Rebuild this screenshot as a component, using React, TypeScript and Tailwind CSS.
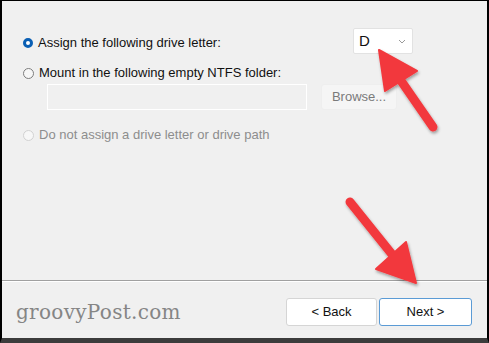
import React from 'react'

function Radio({ state }: { state: 'on' | 'off' | 'disabled' }) {
  if (state === 'on') {
    return <span className="w-[10px] h-[10px] rounded-full border-[3px] border-[#0a5fb4] bg-white shrink-0" />
  }
  return (
    <span
      className={
        'w-[11px] h-[11px] rounded-full border bg-[#f7f7f7] shrink-0 ' +
        (state === 'off' ? 'border-[#7d7d7d]' : 'border-[#d2d2d2]')
      }
    />
  )
}

function Arrows() {
  return (
    <svg className="absolute inset-0 pointer-events-none" width="489" height="343" viewBox="0 0 489 343">
      <defs>
        <filter id="sh" x="-20%" y="-20%" width="140%" height="140%">
          <feDropShadow dx="1" dy="2" stdDeviation="1.5" floodColor="#000" floodOpacity="0.35" />
        </filter>
      </defs>
      <g filter="url(#sh)" fill="#f2393d" stroke="#f2393d" strokeLinejoin="round">
        <line x1="431" y1="126" x2="395" y2="74" strokeWidth="9" strokeLinecap="round" />
        <polygon points="377,49 415,70 383,90" strokeWidth="2" />
        <line x1="348" y1="201" x2="397" y2="262" strokeWidth="9" strokeLinecap="round" />
        <polygon points="414,282 374,268 404,241" strokeWidth="2" />
      </g>
    </svg>
  )
}

export default function App() {
  return (
    <div
      className="relative w-[489px] h-[343px] bg-[#f0f0f0] border-t border-l-2 border-r-2 border-black border-b-[5px] border-b-[#3c3c3c] flex flex-col overflow-hidden"
      style={{ fontFamily: '"Liberation Sans", Arial, sans-serif' }}
    >
      <div className="flex flex-col pt-[27px] pl-[21px] pr-[74px] text-[13px] text-[#111]">
        <div className="flex items-center h-[26px]">
          <div className="flex items-center pt-[3px]">
            <Radio state="on" />
            <span className="ml-[5px]">Assign the following drive letter:</span>
          </div>
          <div className="ml-auto w-[60px] h-[26px] bg-white border border-[#e2e2e2] rounded-[2px] flex items-center pl-[5px] pr-[6px]">
            <span className="text-[15px]">D</span>
            <svg className="ml-auto" width="8" height="5" viewBox="0 0 8 5">
              <path d="M1 1 L4 4 L7 1" fill="none" stroke="#9a9a9a" strokeWidth="1" />
            </svg>
          </div>
        </div>
        <div className="flex items-center h-[16px] mt-[11px]">
          <Radio state="off" />
          <span className="ml-[5px]">Mount in the following empty NTFS folder:</span>
        </div>
        <div className="flex items-center mt-[3px] pl-[24px]">
          <div className="w-[260px] h-[26px] border border-white bg-[#f0f0f0]" />
          <div className="ml-[14px] w-[76px] h-[26px] rounded-[3px] bg-[#f5f5f5] border border-[#eeeeee] flex items-center justify-center text-[#7a7a7a]">
            Browse...
          </div>
        </div>
        <div className="flex items-center h-[16px] mt-[17px] text-[#8d8d8d]">
          <Radio state="disabled" />
          <span className="ml-[5px]">Do not assign a drive letter or drive path</span>
        </div>
      </div>
      <div className="flex-1" />
      <div className="h-px bg-[#a0a0a0]" />
      <div className="h-px bg-white" />
      <div className="flex items-start h-[56px] pl-[14px] pr-[15px]">
        <span
          className="text-[20px] tracking-[0.3px] text-[#858585] mt-[15px]"
          style={{ fontFamily: '"DejaVu Serif", Georgia, serif' }}
        >
          groovyPost.com
        </span>
        <div className="ml-auto mt-[16px] flex gap-[2px] text-[13px] text-[#111]">
          <div className="w-[91px] h-[28px] bg-white border border-[#d5d5d5] rounded-[3px] flex items-center justify-center">
            &lt; Back
          </div>
          <div className="w-[93px] h-[28px] bg-white border border-[#5b9bd5] rounded-[3px] flex items-center justify-center">
            Next &gt;
          </div>
        </div>
      </div>
      <Arrows />
    </div>
  )
}
